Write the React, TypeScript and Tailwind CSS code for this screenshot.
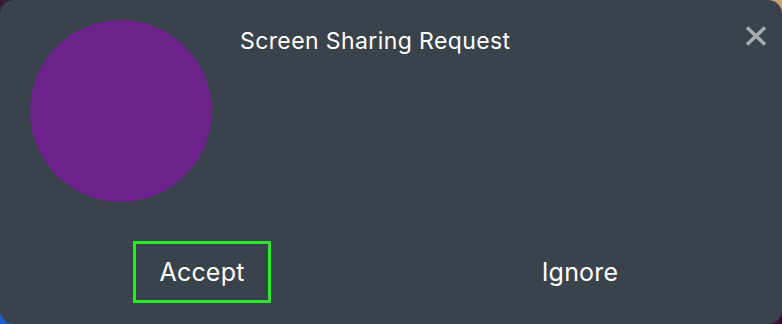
import React from "react";

export default function App() {
  return (
    <div className="w-[782px] h-[324px] bg-[conic-gradient(#c9a26e_0deg_90deg,#3a0e34_90deg_180deg,#1c5fd2_180deg_270deg,#3b1a3a_270deg_330deg,#8fd0e6_330deg_360deg)] font-['Inter','Liberation_Sans',sans-serif]">
      <div className="relative w-full h-full rounded-[14px] bg-[#3a424b] flex flex-col">
        <div className="flex pl-[30px] pt-[20px]">
          <div className="w-[182px] h-[182px] rounded-full bg-[#6c238c] shrink-0" />
          <div className="ml-[28px] mt-[7px] text-[23px] leading-[28px] tracking-[0.4px] text-white">
            Screen Sharing Request
          </div>
        </div>
        <button className="absolute right-[14px] top-[25px] w-[24px] h-[22px] flex items-center justify-center" aria-label="Close">
          <svg width="22" height="20" viewBox="0 0 22 20">
            <path d="M2 1.5 L20 18.5 M20 1.5 L2 18.5" stroke="#a7aaae" strokeWidth="3.6" strokeLinecap="butt" fill="none" />
          </svg>
        </button>
        <div className="flex-1" />
        <div className="grid grid-cols-2 px-[13px] pb-[21px]">
          <div className="flex justify-center">
            <button className="w-[138px] h-[62px] border-[3px] border-[#2ee62e] text-white text-[25px] leading-none tracking-[0.2px] flex items-center justify-center">
              Accept
            </button>
          </div>
          <div className="flex justify-center">
            <button className="w-[138px] h-[62px] text-white text-[25px] leading-none tracking-[0.2px] flex items-center justify-center">
              Ignore
            </button>
          </div>
        </div>
      </div>
    </div>
  );
}
